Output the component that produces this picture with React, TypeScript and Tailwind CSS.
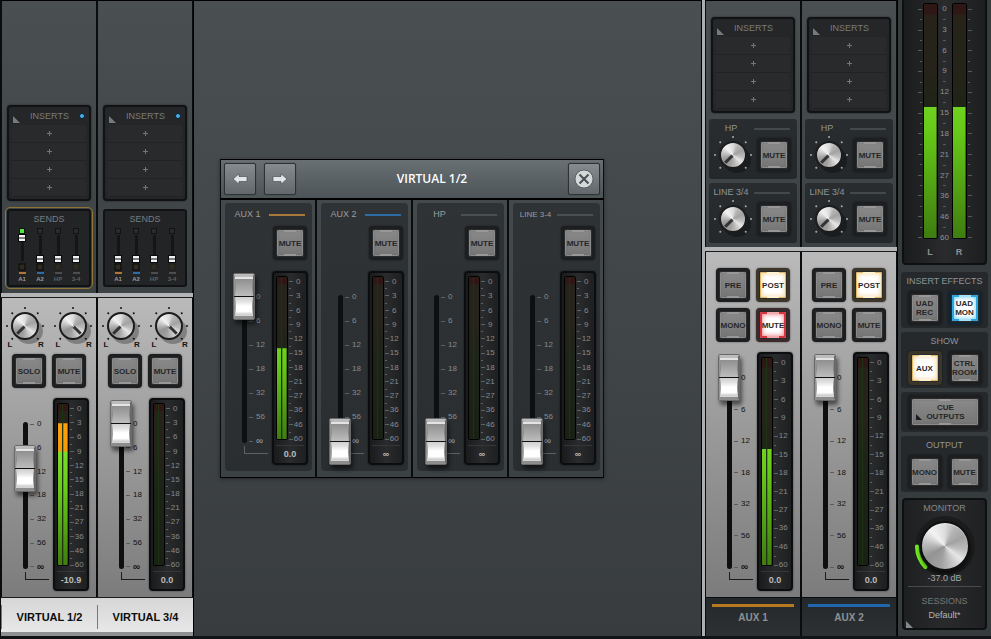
import { useState } from "react";
import type { ReactNode } from "react";

const METER_MARKS = ["0", "3", "6", "9", "12", "15", "18", "21", "27", "36", "46", "60"];
const FADER_MARKS = ["0", "6", "12", "18", "32", "56", "∞"];

// black hairlines on both sides of a channel strip
const EDGES = "shadow-[inset_1px_0_#0b0c0d,inset_-1px_0_#0b0c0d]";
const METAL =
  "bg-[conic-gradient(from_0deg,#dcdcdc,#b4b4b4_8%,#a2a2a2_18%,#bdbdbd_28%,#e6e6e6_36%,#c4c4c4_44%,#a0a0a0_54%,#939393_66%,#b9b9b9_76%,#f2f2f2_88%,#dcdcdc)]";

type Tone = "off" | "amber" | "red" | "blue";

const FACES: Record<Tone, string> = {
  off: "bg-linear-to-b from-[#8a8a8a] to-[#757575] shadow-[inset_0_0_0_1px_#8b8b8b,inset_0_0_3px_#606060] text-[#262626]",
  amber: "bg-white shadow-[inset_0_0_0_1px_#e3ba68,inset_0_0_5px_1px_#f1cd80] text-[#2a2a2a]",
  red: "bg-white shadow-[inset_0_0_0_2px_#d8353f,inset_0_0_5px_2px_#ee6c72] text-[#2a2a2a]",
  blue: "bg-white shadow-[inset_0_0_0_2px_#29a5df,inset_0_0_5px_2px_#63c9f5] text-[#2a2a2a]",
};

const BEZELS: Record<Tone, string> = {
  off: "border-[#1d1e1f]",
  amber: "border-[#3b352a]",
  red: "border-[#3a2a2b]",
  blue: "border-[#142531]",
};

const NOTCHES: Record<Tone, string> = {
  off: "bg-[#989898]",
  amber: "bg-[#fff3d6]",
  red: "bg-[#f3a9ad]",
  blue: "bg-[#a5dff8]",
};

function PadButton({
  children,
  tone = "off",
  wide = false,
}: {
  children: ReactNode;
  tone?: Tone;
  wide?: boolean;
}) {
  const [pressed, setPressed] = useState(tone !== "off");
  return (
    <button
      type="button"
      aria-pressed={pressed}
      onClick={() => setPressed(!pressed)}
      className={`${wide ? "w-[74px]" : "w-[34px]"} ${BEZELS[tone]} h-[34px] shrink-0 rounded-[4px] border-[3px] bg-[#2a2b2c] p-px text-[8px] leading-[9px] font-bold shadow-[0_0_2px_#0008]`}
    >
      <span
        className={`${FACES[tone]} flex h-full flex-col items-center justify-between rounded-[2px]`}
      >
        <span className={`${NOTCHES[tone]} h-0.5 w-3`} />
        <span className="flex items-center whitespace-nowrap">{children}</span>
        <span className={`${NOTCHES[tone]} h-0.5 w-3`} />
      </span>
    </button>
  );
}

function Knob({
  label,
  start,
  dark = false,
  sides = false,
}: {
  label: string;
  start: number;
  dark?: boolean;
  sides?: boolean;
}) {
  const [value, setValue] = useState(start);
  const ink = dark ? "#a7abad" : "#151515";
  const dots = [-135, -90, -45, 0, 45, 90, 135];
  return (
    <div className="grid h-[34px] w-[46px] shrink-0 place-items-center">
      <svg
        viewBox="-24 -17 48 34"
        className="col-start-1 row-start-1 h-[34px] w-12 overflow-visible"
        aria-hidden="true"
      >
        <ellipse cx="4" cy="5" rx="14" ry="13" fill="#000" opacity=".28" />
        {dots.map((a) => (
          <circle key={a} cx="0" cy="-18" r="1" fill={ink} transform={`rotate(${a})`} />
        ))}
        {sides && (
          <g fill={ink} fontSize="8" fontWeight="bold" textAnchor="middle">
            <text x="-15" y="21">L</text>
            <text x="16" y="21">R</text>
          </g>
        )}
      </svg>
      <div
        className={`${METAL} col-start-1 row-start-1 size-7 rounded-full border-2 border-[#1c1c1c]`}
      />
      <svg
        viewBox="-14 -14 28 28"
        className="col-start-1 row-start-1 size-7"
        aria-hidden="true"
      >
        <path
          d="M0 -1V-11"
          stroke="#333"
          strokeWidth="3"
          transform={`rotate(${-135 + value * 2.7})`}
        />
      </svg>
      <input
        type="range"
        aria-label={label}
        value={value}
        onChange={(e) => setValue(Number(e.target.value))}
        className="col-start-1 row-start-1 size-7 opacity-0"
      />
    </div>
  );
}

function FaderCap() {
  return (
    <svg
      viewBox="0 0 22 47"
      className="h-[47px] w-[22px] shrink-0 overflow-visible drop-shadow-[2px_4px_2px_#0008]"
      aria-hidden="true"
    >
      <defs>
        <linearGradient id="capUpper" x1="0" y1="0" x2="0" y2="1">
          <stop offset="0" stopColor="#8f8f8f" />
          <stop offset="1" stopColor="#bdbdbd" />
        </linearGradient>
        <linearGradient id="capLower" x1="0" y1="0" x2="0" y2="1">
          <stop offset="0" stopColor="#cfcfcf" />
          <stop offset=".25" stopColor="#e2e2e2" />
          <stop offset=".5" stopColor="#ffffff" />
          <stop offset=".8" stopColor="#ffffff" />
          <stop offset="1" stopColor="#c4c4c4" />
        </linearGradient>
        <linearGradient id="capSide" x1="0" y1="0" x2="1" y2="0">
          <stop offset="0" stopColor="#a8a8a8" />
          <stop offset=".12" stopColor="#777" />
          <stop offset=".88" stopColor="#777" />
          <stop offset="1" stopColor="#5f5f5f" />
        </linearGradient>
      </defs>
      <rect x=".5" y=".5" width="21" height="46" rx="1.5" fill="url(#capSide)" stroke="#6a6a6a" />
      <path d="M1 1H21L19 5H3Z" fill="#bcbcbc" />
      <path d="M2 4H20V6H2Z" fill="#e4e4e4" />
      <path d="M2 6H20Q18.500 14 20 23H2Q3.500 14 2 6Z" fill="url(#capUpper)" />
      <path d="M2 24H20Q18.500 34 20 42H2Q3.500 34 2 24Z" fill="url(#capLower)" />
      <path d="M1 23H21V24H1Z" fill="#111" />
      <path d="M3 42H19L21 46H1Z" fill="#8d8d8d" />
      <path d="M2 41.500H20V43H2Z" fill="#d5d5d5" />
    </svg>
  );
}

function Fader({ label, start, dark }: { label: string; start: number; dark: boolean }) {
  const [value, setValue] = useState(start);
  return (
    <div className="grid flex-1 justify-items-end">
      <div className="col-start-1 row-start-1 mt-6 mr-[25px] mb-[22px] w-[5px] rounded-full bg-[#0e0f10]" />
      <ul
        className={`${dark ? "text-[#868b8e]" : "text-[#111]"} col-start-1 row-start-1 mt-5 mb-[18px] flex w-[23px] flex-col justify-between text-[8px] leading-3`}
      >
        {FADER_MARKS.map((mark) => (
          <li key={mark} className="flex h-3 items-center gap-[3px]">
            <span className={`${dark ? "bg-[#596064]" : "bg-[#5c5c5c]"} h-px w-1`} />
            <span className={mark === "∞" ? "text-[10px] font-bold" : ""}>{mark}</span>
          </li>
        ))}
      </ul>
      <div
        className={`${dark ? "border-[#5b6063]" : "border-[#1b1b1b]"} col-start-1 row-start-1 mr-1 mb-[11px] h-2 w-6 self-end border-b border-l`}
      />
      <div className="col-start-1 row-start-1 mt-0.5 mr-[17px] flex flex-col">
        <div style={{ flexGrow: 100 - value }} />
        <FaderCap />
        <div style={{ flexGrow: value }} />
      </div>
      <input
        type="range"
        aria-label={label}
        value={value}
        onChange={(e) => setValue(Number(e.target.value))}
        className="col-start-1 row-start-1 mr-[17px] h-full w-[22px] opacity-0 [direction:rtl] [writing-mode:vertical-lr]"
      />
    </div>
  );
}

function Bar({ level, peak = false }: { level: number; peak?: boolean }) {
  return (
    <div className="grid flex-1 bg-[linear-gradient(#2f1715_0%,#2f1715_4%,#27231a_5%,#25231a_30%,#1b2417_55%,#192115_100%)]">
      <div
        className="col-start-1 row-start-1 bg-[linear-gradient(#ffa60c_0%,#f89a08_29%,#7bdf28_30%,#66c818_55%,#3f7d10_100%)]"
        style={{ clipPath: `inset(${100 - level}% 0 0 0)` }}
      />
      {peak && level > 0 && (
        <div className="col-start-1 row-start-1 flex flex-col">
          <div style={{ flexGrow: 100 - level }} />
          <div className="mt-px h-px bg-[#16300a]" />
          <div style={{ flexGrow: level }} />
        </div>
      )}
    </div>
  );
}

function Ticks({ align, color }: { align: string; color: string }) {
  return (
    <div className={`${align} flex w-1 flex-col justify-between`}>
      {Array.from({ length: 23 }, (_, i) => (
        <span key={i} className={`${color} ${i % 2 ? "w-0.5" : "w-1"} h-px`} />
      ))}
    </div>
  );
}

function Meter({ level, readout }: { level: number; readout: string }) {
  return (
    <div className="flex w-9 shrink-0 flex-col rounded-[4px] border-2 border-[#0c0d0e] bg-linear-to-r from-[#1a1b1c] via-[#2a2b2c] to-[#1e1f20] px-0.5 pt-[3px] pb-px shadow-[0_0_2px_#0009]">
      <div className="flex flex-1">
        <div className="mb-[5px] flex w-3 gap-px rounded-[2px] border border-black bg-[#1f3211]">
          <Bar level={level} />
          <Bar level={level} peak={level < 70} />
        </div>
        <div className="mt-[5px] mb-[5px] ml-px flex">
          <Ticks align="items-start" color="bg-[#5d6265]" />
        </div>
        <ul className="flex w-3 flex-col justify-between text-center text-[8px] leading-3 text-[#858a8d]">
          {METER_MARKS.map((mark) => (
            <li key={mark} className="flex h-3 justify-center">
              {mark}
            </li>
          ))}
        </ul>
      </div>
      <output className="flex h-[17px] items-center justify-center border-t border-[#343638] pt-0.5 text-[9px] font-bold text-[#b9bcbe]">
        {readout}
      </output>
    </div>
  );
}

function Inserts({ active = false }: { active?: boolean }) {
  return (
    <section className="mx-1.5 rounded-[4px] border-2 border-[#111213] bg-[#252627] pb-0.5 shadow-[0_0_2px_#0009]">
      <div className="flex h-[18px] items-center justify-between px-1">
        <svg viewBox="0 0 7 7" className="mt-1.5 size-[7px]" aria-hidden="true">
          <path d="M0 0L7 7H0Z" fill="#777a7d" />
        </svg>
        <h3 className="text-[9px] leading-3 text-[#777c7f]">INSERTS</h3>
        <span
          className={`${active ? "border border-[#0b1c28] bg-[#45b0ee]" : ""} size-[6px] rounded-full`}
        />
      </div>
      {[1, 2, 3, 4].map((slot) => (
        <button
          key={slot}
          type="button"
          aria-label={`Insert ${slot}`}
          className="mx-[3px] flex h-[18px] w-[74px] items-center justify-center border-b border-[#212223] bg-[#292a2b]"
        >
          <svg viewBox="0 0 5 5" className="size-[5px]" aria-hidden="true">
            <path d="M2 0H3V2H5V3H3V5H2V3H0V2H2Z" fill="#74777a" />
          </svg>
        </button>
      ))}
    </section>
  );
}

function Send({ name, color, start }: { name: string; color: string; start: number }) {
  const [value, setValue] = useState(start);
  const lit = value > 0;
  const y = 28 - value * 0.21;
  return (
    <div className="grid w-[18px] justify-items-center">
      <svg viewBox="0 0 18 48" className="col-start-1 row-start-1 h-12 w-[18px]" aria-hidden="true">
        <rect x="6.500" y="1.500" width="5" height="5" fill={lit ? "#4fe83a" : "#2a2b29"} stroke="#131313" />
        <rect x="8" y="8" width="3" height="26" fill="#151515" />
        <rect x="5.500" y={y + 0.5} width="7" height="7" fill="#f1f1f1" stroke="#0b0b0b" />
        <path d={`M5.500 ${y + 4}H12.500`} stroke="#111" />
        <rect x="6" y="37" width="6" height="6" fill="#2f2a20" stroke={name.startsWith("A") ? "#080808" : "#1c1c1c"} />
        <rect x="6" y="45" width="7" height="2" fill={color} />
      </svg>
      <input
        type="range"
        aria-label={`Send ${name}`}
        value={value}
        onChange={(e) => setValue(Number(e.target.value))}
        className="col-start-1 row-start-1 h-9 w-3 opacity-0 [direction:rtl] [writing-mode:vertical-lr]"
      />
      <span
        className={`${name.startsWith("A") ? "text-[#96999b]" : "text-[#5d6062]"} text-[6px] leading-2 font-bold`}
      >
        {name}
      </span>
    </div>
  );
}

function Sends({ selected = false }: { selected?: boolean }) {
  return (
    <section
      className={`${selected ? "border-[#8f7434]" : "border-transparent"} mx-1 mt-1.5 rounded-[5px] border p-px`}
    >
      <div className="h-[78px] rounded-[3px] border-2 border-[#111213] bg-[#232425]">
        <h3 className="mt-0.5 text-center text-[9px] leading-3 text-[#777c7f]">SENDS</h3>
        <div className="mt-0.5 flex justify-center">
          <Send name="A1" color="#b3743a" start={selected ? 100 : 0} />
          <Send name="A2" color="#2d6ca8" start={0} />
          <Send name="HP" color="#4b4e50" start={0} />
          <Send name="3-4" color="#4b4e50" start={0} />
        </div>
      </div>
    </section>
  );
}

function CueSend({ name }: { name: string }) {
  return (
    <section className="mx-1 h-[60px] rounded-[3px] bg-linear-to-b from-[#292d30] to-[#24282b]">
      <div className="flex h-[19px] items-center gap-px">
        <h3 className="flex w-11 justify-center text-[9px] whitespace-nowrap text-[#8f9396]">{name}</h3>
        <span className="h-0.5 w-9 bg-[#43484b]" />
      </div>
      <div className="flex items-center gap-0.5">
        <Knob label={`${name} send level`} start={0} dark />
        <PadButton>MUTE</PadButton>
      </div>
    </section>
  );
}

function InputStrip({
  name,
  fader,
  level,
  readout,
  selected,
}: {
  name: string;
  fader: number;
  level: number;
  readout: string;
  selected?: boolean;
}) {
  return (
    <article className="flex w-24 flex-col">
      <div
        className={`${EDGES} flex flex-1 flex-col justify-end border-t border-black bg-linear-to-b from-[#4a4f52] to-[#3c4144] pb-1`}
      >
        <Inserts active />
        <Sends selected={selected} />
      </div>
      <div className="h-[5px] border-b border-[#1b1b1b] bg-[#b3b4b5]" />
      <div
        className={`${EDGES} border-b border-[#1b1b1b] bg-linear-to-b from-[#bababa] to-[#7c7c7c] pt-[11px] pb-1.5`}
      >
        <div className="flex gap-0.5">
          <Knob label={`${name} pan left`} start={0} sides />
          <Knob label={`${name} pan right`} start={100} sides />
        </div>
        <div className="mt-[11px] flex gap-1.5 pl-[11px]">
          <PadButton>SOLO</PadButton>
          <PadButton>MUTE</PadButton>
        </div>
        <div className="mt-2.5 flex h-[193px] pr-2">
          <Fader label={`${name} level`} start={fader} dark={false} />
          <Meter level={level} readout={readout} />
        </div>
      </div>
      <div className="h-[38px] border-b-4 border-[#8f9091] bg-linear-to-b from-[#d6d6d6] to-[#e8e8e8] pt-[7px]">
        <h2 className="flex h-6 items-center justify-center border-l border-[#777] text-[11px] font-bold text-[#0c0c0c]">
          {name}
        </h2>
      </div>
    </article>
  );
}

function AuxStrip({
  name,
  accent,
  muted,
  level,
}: {
  name: string;
  accent: string;
  muted: boolean;
  level: number;
}) {
  return (
    <article className="flex w-24 flex-col">
      <div
        className={`${EDGES} flex flex-1 flex-col border-t border-black bg-linear-to-b from-[#4a4f52] to-[#3c4144] pt-4 pb-1`}
      >
        <Inserts />
        <div className="mt-1.5 flex flex-col gap-1">
          <CueSend name="HP" />
          <CueSend name="LINE 3/4" />
        </div>
      </div>
      <div className="h-[5px] border-b border-[#1b1b1b] bg-[#b3b4b5]" />
      <div
        className={`${EDGES} border-b border-[#0c0c0c] bg-linear-to-b from-[#bababa] to-[#7c7c7c] pt-4 pb-1.5`}
      >
        <div className="flex flex-wrap gap-1.5 pl-[11px]">
          <PadButton>PRE</PadButton>
          <PadButton tone="amber">POST</PadButton>
          <PadButton>MONO</PadButton>
          <PadButton tone={muted ? "red" : "off"}>MUTE</PadButton>
        </div>
        <div className="mt-2.5 flex h-[239px] pr-2">
          <Fader label={`${name} level`} start={100} dark={false} />
          <Meter level={level} readout="0.0" />
        </div>
      </div>
      <div className={`${EDGES} h-[38px] bg-linear-to-b from-[#24282b] to-[#2d3134] px-[7px] pt-1.5`}>
        <div className={`${accent} h-[3px]`} />
        <h2 className="mt-[5px] text-center text-[10px] leading-3 font-bold text-[#8d9194]">{name}</h2>
      </div>
    </article>
  );
}

function SendStrip({
  name,
  accent,
  fader,
  level,
  readout,
}: {
  name: string;
  accent: string;
  fader: number;
  level: number;
  readout: string;
}) {
  return (
    <article
      className={`${EDGES} w-24 bg-linear-to-b from-[#44494c] to-[#3c4144] pt-[3px] pr-1 pb-1.5 pl-[5px]`}
    >
      <div className="flex flex-col rounded-[4px] bg-linear-to-b from-[#2f3336] to-[#2a2e31] pt-[5px] pb-1.5">
        <div className="flex h-[13px] items-center">
          <h3
            className={`${name.length > 6 ? "text-[8px]" : "text-[9px]"} flex w-11 shrink-0 justify-center pl-px whitespace-nowrap text-[#9a9ea0]`}
          >
            {name}
          </h3>
          <span className={`${accent} h-0.5 w-9`} />
        </div>
        <div className="mt-[5px] flex justify-end pr-[5px]">
          <PadButton>MUTE</PadButton>
        </div>
        <div className="mt-[11px] flex h-[194px] pr-1">
          <Fader label={`${name} send`} start={fader} dark />
          <Meter level={level} readout={readout} />
        </div>
      </div>
    </article>
  );
}

function HeaderButton({ label, children }: { label: string; children: ReactNode }) {
  return (
    <button
      type="button"
      aria-label={label}
      className="flex size-8 items-center justify-center rounded-[2px] border border-[#2c3134] bg-linear-to-b from-[#858b8e] to-[#62686b] shadow-[0_0_1px_#0008]"
    >
      {children}
    </button>
  );
}

function SendsDialog() {
  return (
    <div
      role="dialog"
      aria-labelledby="sends-title"
      className="w-96 shrink-0 self-start border-y border-black shadow-[0_1px_4px_#0006]"
    >
      <header
        className={`${EDGES} flex h-10 items-center border-b-2 border-black bg-linear-to-b from-[#687074] to-[#4c5457] px-1`}
      >
        <div className="flex gap-2">
          <HeaderButton label="Previous channel">
            <svg viewBox="0 0 16 12" className="h-3 w-4" aria-hidden="true">
              <path d="M1 6L7 .8V3.500H15V8.500H7V11.200Z" fill="#e2e4e5" stroke="#3d4346" strokeWidth=".6" />
            </svg>
          </HeaderButton>
          <HeaderButton label="Next channel">
            <svg viewBox="0 0 16 12" className="h-3 w-4" aria-hidden="true">
              <path d="M15 6L9 .8V3.500H1V8.500H9V11.200Z" fill="#e2e4e5" stroke="#3d4346" strokeWidth=".6" />
            </svg>
          </HeaderButton>
        </div>
        <h2
          id="sends-title"
          className="flex-1 text-center font-['Open_Sans',sans-serif] text-[12px] font-semibold text-white"
        >
          VIRTUAL 1/2
        </h2>
        <HeaderButton label="Close">
          <svg viewBox="0 0 20 20" className="size-5" aria-hidden="true">
            <circle cx="10" cy="10" r="9" fill="#d5d8d9" stroke="#4a5053" strokeWidth=".8" />
            <path d="M5.500 5.500L14.500 14.500M14.500 5.500L5.500 14.500" stroke="#484e51" strokeWidth="2" />
          </svg>
        </HeaderButton>
      </header>
      <div className="flex">
        <SendStrip name="AUX 1" accent="bg-[#a9783c]" fader={100} level={56} readout="0.0" />
        <SendStrip name="AUX 2" accent="bg-[#2f6ba3]" fader={0} level={0} readout="∞" />
        <SendStrip name="HP" accent="bg-[#4a4f52]" fader={0} level={0} readout="∞" />
        <SendStrip name="LINE 3-4" accent="bg-[#4a4f52]" fader={0} level={0} readout="∞" />
      </div>
    </div>
  );
}

function OutputMeter() {
  return (
    <section className="mx-px flex flex-1 flex-col rounded-b-[4px] border-x-2 border-b-2 border-[#0e0f10] bg-linear-to-r from-[#1b1c1d] via-[#2a2b2c] to-[#1d1e1f] pt-[3px]">
      <div className="flex flex-1 justify-center">
        <div className="mt-1.5 mr-px mb-1.5 flex">
          <Ticks align="items-end" color="bg-[#565a5d]" />
        </div>
        <div className="mb-[5px] flex w-[15px] rounded-[2px] border border-black bg-black">
          <Bar level={56} />
        </div>
        <ul className="mt-px mb-px flex w-3.5 flex-col justify-between text-[8px] leading-[10px] text-[#8d9194]">
          {METER_MARKS.flatMap((mark, i) => [
            ...(i ? [<li key={`${mark}-minor`} className="flex h-[10px] items-center justify-center"><span className="h-px w-[3px] bg-[#565a5d]" /></li>] : []),
            <li key={mark} className="flex h-[10px] justify-center">{mark}</li>,
          ])}
        </ul>
        <div className="mb-[5px] flex w-[15px] rounded-[2px] border border-black bg-black">
          <Bar level={56} peak />
        </div>
        <div className="mt-1.5 mb-1.5 ml-px flex">
          <Ticks align="items-start" color="bg-[#565a5d]" />
        </div>
      </div>
      <div className="flex h-[19px] justify-center gap-[15px] pt-0.5 text-[9px] leading-3 font-bold text-[#8d9194]">
        <span className="w-3.5 text-center">L</span>
        <span className="w-3.5 text-center">R</span>
      </div>
    </section>
  );
}

function ControlGroup({ title, children }: { title: string; children: ReactNode }) {
  return (
    <section className="h-14 rounded-[3px] bg-[#25292c]">
      <h3 className="flex h-[19px] items-center justify-center text-[9px] whitespace-nowrap text-[#8f9396]">
        {title}
      </h3>
      <div className="flex justify-center gap-1.5">{children}</div>
    </section>
  );
}

function MonitorPanel() {
  const [value, setValue] = useState(20);
  return (
    <section className="mx-px mt-0.5 h-[132px] rounded-[4px] border-2 border-[#0e0f10] bg-linear-to-r from-[#1e1f20] via-[#292a2b] to-[#1f2021] text-center text-[9px] leading-3">
      <h3 className="mt-0.5 text-[#83878a]">MONITOR</h3>
      <div className="grid h-[58px] place-items-center">
        <svg viewBox="-32 -32 64 64" className="col-start-1 row-start-1 size-16 overflow-visible" aria-hidden="true">
          <circle r="30" fill="#1b1c1d" />
          <path d="M-28 0.500A30 30 0 0 0 -19.500 21" fill="none" stroke="#76f21f" strokeWidth="4" strokeLinecap="round" />
        </svg>
        <div
          className={`${METAL} col-start-1 row-start-1 size-[50px] rounded-full border-2 border-[#101010] shadow-[inset_0_1px_1px_#fff8,0_3px_4px_#000a]`}
        />
        <input
          type="range"
          aria-label="Monitor level"
          value={value}
          onChange={(e) => setValue(Number(e.target.value))}
          className="col-start-1 row-start-1 size-12 opacity-0"
        />
      </div>
      <output className="block text-[#a2a6a8]">-37.0 dB</output>
      <div className="mx-1 mt-0.5 border-t border-[#484b4d] pt-2">
        <h3 className="text-[#73777a]">SESSIONS</h3>
      </div>
      <button type="button" className="mt-0.5 block w-full text-[#b0b3b5]">
        Default*
      </button>
      <svg viewBox="0 0 7 7" className="ml-0.5 size-[7px]" aria-hidden="true">
        <path d="M0 0L7 7H0Z" fill="#85888a" />
      </svg>
    </section>
  );
}

export default function App() {
  return (
    <div className="flex min-h-screen bg-[#121314] pb-[3px] font-['Liberation_Sans',Arial,sans-serif]">
      <aside className="flex shrink-0 bg-[#0b0c0d] pl-px">
        <InputStrip name="VIRTUAL 1/2" fader={69} level={88} readout="-10.9" selected />
        <InputStrip name="VIRTUAL 3/4" fader={100} level={0} readout="0.0" />
      </aside>

      <main className="flex flex-1 border-x border-t border-black bg-linear-to-b from-[#4a4f52] to-[#383c3f] pt-[158px] pl-[26px]">
        <SendsDialog />
      </main>

      <section className="flex shrink-0 border-l-[3px] border-[#adaeb1]">
        <AuxStrip name="AUX 1" accent="bg-[#b87a20]" muted level={56} />
        <AuxStrip name="AUX 2" accent="bg-[#1f66ad]" muted={false} level={0} />
      </section>

      <aside className="flex w-[94px] shrink-0 flex-col gap-1 border-l border-black bg-[#363b3e] px-[3px] pb-1.5">
        <OutputMeter />
        <div className="mt-[3px] flex flex-col gap-1">
          <ControlGroup title="INSERT EFFECTS">
            <PadButton>
              UAD
              <br />
              REC
            </PadButton>
            <PadButton tone="blue">
              UAD
              <br />
              MON
            </PadButton>
          </ControlGroup>
          <ControlGroup title="SHOW">
            <PadButton tone="amber">AUX</PadButton>
            <PadButton>
              CTRL
              <br />
              ROOM
            </PadButton>
          </ControlGroup>
          <section className="flex h-10 items-center justify-center rounded-[3px] bg-[#25292c]">
            <PadButton wide>
              <svg viewBox="0 0 6 6" className="mt-2.5 mr-1 size-1.5" aria-hidden="true">
                <path d="M0 0L6 6H0Z" fill="#1c1c1c" />
              </svg>
              <span className="mr-2">
                CUE
                <br />
                OUTPUTS
              </span>
            </PadButton>
          </section>
          <ControlGroup title="OUTPUT">
            <PadButton>MONO</PadButton>
            <PadButton>MUTE</PadButton>
          </ControlGroup>
        </div>
        <MonitorPanel />
      </aside>
    </div>
  );
}
